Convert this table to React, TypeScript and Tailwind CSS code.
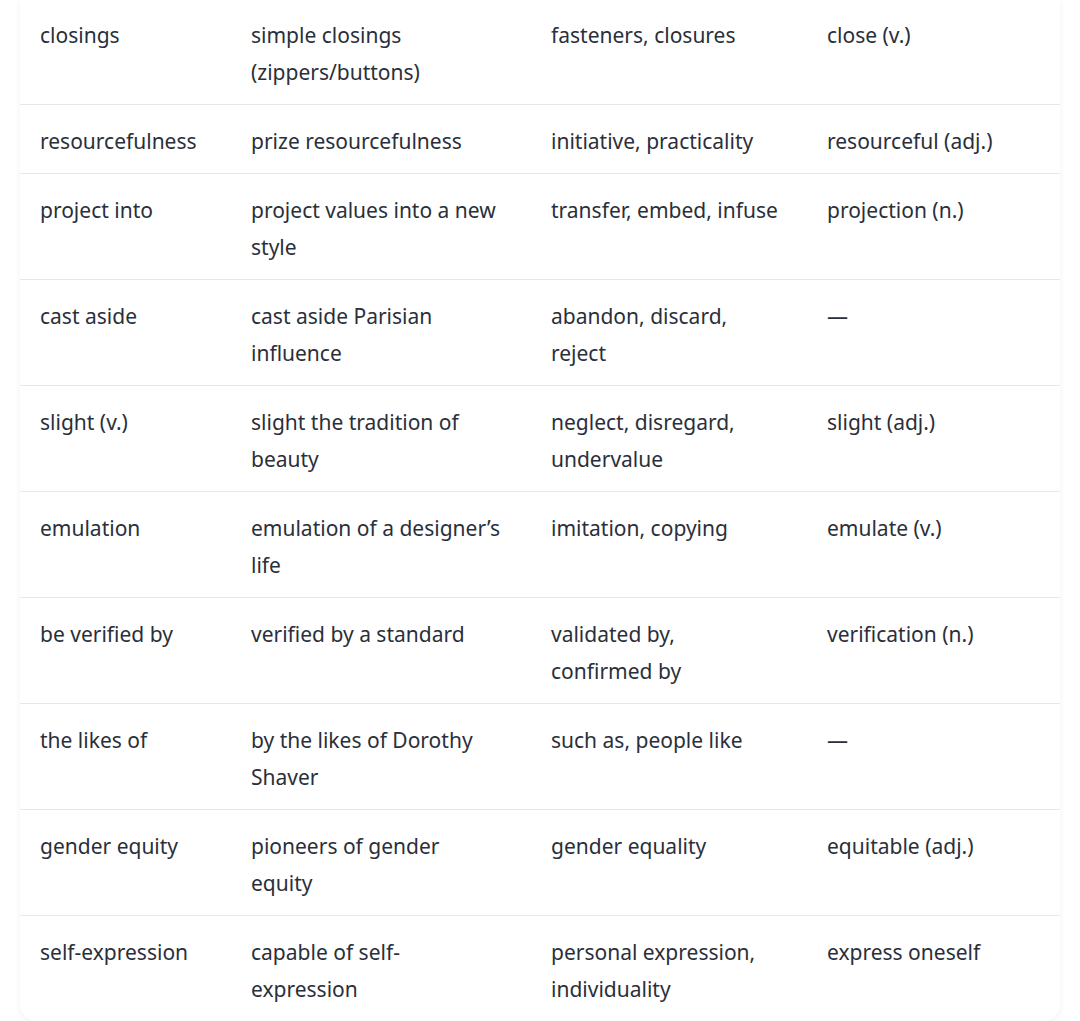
const rows: [string, string, string, string][] = [
  ["closings", "simple closings (zippers/buttons)", "fasteners, closures", "close (v.)"],
  ["resourcefulness", "prize resourcefulness", "initiative, practicality", "resourceful (adj.)"],
  ["project into", "project values into a new style", "transfer, embed, infuse", "projection (n.)"],
  ["cast aside", "cast aside Parisian influence", "abandon, discard, reject", "—"],
  ["slight (v.)", "slight the tradition of beauty", "neglect, disregard, undervalue", "slight (adj.)"],
  ["emulation", "emulation of a designer’s life", "imitation, copying", "emulate (v.)"],
  ["be verified by", "verified by a standard", "validated by, confirmed by", "verification (n.)"],
  ["the likes of", "by the likes of Dorothy Shaver", "such as, people like", "—"],
  ["gender equity", "pioneers of gender equity", "gender equality", "equitable (adj.)"],
  ["self-expression", "capable of self-expression", "personal expression, individuality", "express oneself"],
];

const cellPad = ["pl-5 pr-4", "pl-5 pr-[30px]", "pl-5 pr-[27px]", "pl-5 pr-4"];

export default function App() {
  return (
    <div className="w-[1080px] h-[1021px] bg-white overflow-hidden">
      <div className="mx-[20px] -mt-[1px] rounded-b-2xl shadow-[0_2px_6px_rgba(0,0,0,0.06)] bg-white">
        <table
          className="w-full table-fixed border-collapse text-[21px] leading-[37px] text-[#2a2f3a]"
          style={{ fontFamily: '"Noto Sans", "Open Sans", sans-serif' }}
        >
          <colgroup>
            <col className="w-[211px]" />
            <col className="w-[300px]" />
            <col className="w-[276px]" />
            <col />
          </colgroup>
          <tbody>
            {rows.map((r, i) => (
              <tr key={i} className={i < rows.length - 1 ? "border-b border-[#e5e7eb]" : ""}>
                {r.map((c, j) => (
                  <td key={j} className={`align-top pt-[18px] pb-[13px] ${cellPad[j]}`}>
                    {c}
                  </td>
                ))}
              </tr>
            ))}
          </tbody>
        </table>
      </div>
    </div>
  );
}
